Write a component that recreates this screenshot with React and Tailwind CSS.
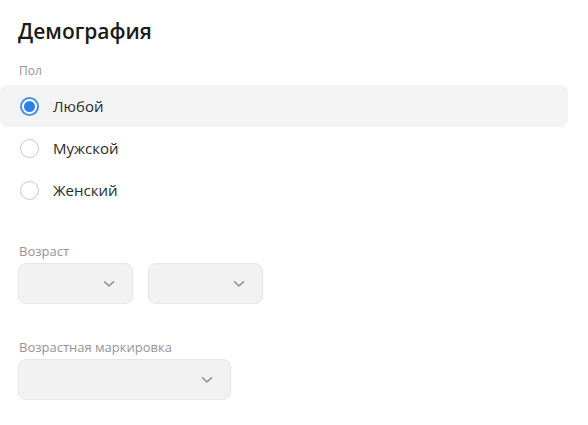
import React, { useState } from "react";

const font = { fontFamily: '"Open Sans", "Noto Sans", sans-serif' };

const Chevron = () => (
  <svg width="12" height="8" viewBox="0 0 12 8" fill="none">
    <path d="M1.5 1.8 L6 5.8 L10.5 1.8" stroke="#959595" strokeWidth="1.6" strokeLinecap="round" strokeLinejoin="round" />
  </svg>
);

const Select = ({ width }) => (
  <button
    className={`${width} h-[41px] rounded-lg border border-[#e6e6e6] bg-[#f2f2f2] flex items-center justify-end pr-[17px]`}
  >
    <Chevron />
  </button>
);

const Radio = ({ label, checked, onClick }) => (
  <div
    onClick={onClick}
    className={`flex items-center h-[42px] pl-[20px] rounded-lg cursor-pointer ${
      checked ? "bg-[#f3f3f3] h-[41px]" : ""
    }`}
  >
    {checked ? (
      <span className="w-[19px] h-[19px] rounded-full border-2 border-[#4a90e2] flex items-center justify-center bg-white">
        <span className="w-[11px] h-[11px] rounded-full bg-[#2f7fe6]" />
      </span>
    ) : (
      <span className="w-[19px] h-[19px] rounded-full border-[1.5px] border-[#c8c8c8] bg-white" />
    )}
    <span className="ml-[14px] text-[15px] text-[#2b2b2b]">{label}</span>
  </div>
);

export default function App() {
  const [gender, setGender] = useState("any");
  const options = [
    ["any", "Любой"],
    ["male", "Мужской"],
    ["female", "Женский"],
  ];

  return (
    <div className="w-[588px] h-[425px] bg-white pt-[16px]" style={font}>
      <h2 className="pl-[18px] text-[21px] font-semibold text-[#1a1a1a] leading-[30px]">Демография</h2>

      <div className="pl-[19px] mt-[17px] text-[12px] text-[#959595] leading-[16px]">Пол</div>
      <div className="mt-[6px] w-[568px] flex flex-col">
        {options.map(([value, label]) => (
          <Radio key={value} label={label} checked={gender === value} onClick={() => setGender(value)} />
        ))}
      </div>

      <div className="pl-[19px] mt-[32px] text-[13px] text-[#959595] leading-[17px]">Возраст</div>
      <div className="pl-[18px] mt-[3px] flex gap-[15px]">
        <Select width="w-[115px]" />
        <Select width="w-[115px]" />
      </div>

      <div className="pl-[19px] mt-[35px] text-[13px] text-[#959595] leading-[17px]">Возрастная маркировка</div>
      <div className="pl-[18px] mt-[3px] flex">
        <Select width="w-[213px]" />
      </div>
    </div>
  );
}
